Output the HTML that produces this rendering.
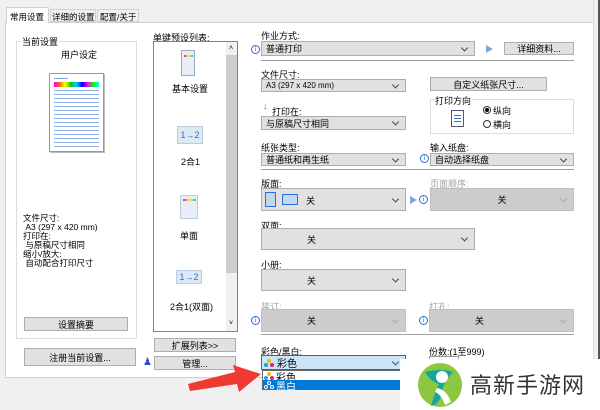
<!DOCTYPE html>
<html><head><meta charset="utf-8"><style>
*{margin:0;padding:0;box-sizing:border-box}
body{width:600px;height:410px;background:#f0f0f0;position:relative;overflow:hidden;font-family:"Liberation Sans","Noto Sans CJK SC",sans-serif;font-size:9px;color:#000}
.a{position:absolute;white-space:nowrap}
.sel{position:absolute;background:#e1e1e1;border:1px solid #adadad;font-size:9px;padding-left:4px;display:flex;align-items:center}
.sel::after{content:"";position:absolute;right:7px;top:50%;width:4px;height:4px;border-right:1px solid #444;border-bottom:1px solid #444;transform:translateY(-70%) rotate(45deg)}
.dis{background:#cccccc;border-color:#bfbfbf}
.dis::after{border-color:#aaa}
.btn{position:absolute;background:#e1e1e1;border:1px solid #adadad;text-align:center;font-size:9px;display:flex;align-items:center;justify-content:center}
.sep{position:absolute;height:2px;border-top:1px solid #a0a0a0;border-bottom:1px solid #fff}
.i{position:absolute;width:9px;height:9px;border:1px solid #2a6fd6;border-radius:50%;color:#2a6fd6;font-size:7px;line-height:7px;text-align:center;font-family:"Liberation Serif",serif}
.tri{position:absolute;width:0;height:0;border-left:7px solid #7aa8e0;border-top:4px solid transparent;border-bottom:4px solid transparent}
.ctr{justify-content:center;padding-left:0}
.dots{position:absolute;width:10px;height:8px}
.dots i{position:absolute;width:4px;height:4px;border-radius:50%}
</style></head><body>
<!-- tabs -->
<div class="a" style="left:6px;top:7px;width:43px;height:16px;background:#fff;border:1px solid #d0d0d0;border-bottom:none;z-index:2;padding:3px 0 0 3px;font-size:8.5px">常用设置</div>
<div class="a" style="left:50px;top:9px;width:46px;height:13px;background:#f0f0f0;border:1px solid #d0d0d0;padding:1px 0 0 1px;font-size:8.5px;overflow:hidden">详细的设置</div>
<div class="a" style="left:97px;top:9px;width:42px;height:13px;background:#f0f0f0;border:1px solid #d0d0d0;padding:1px 0 0 2px;font-size:8.5px">配置/关于</div>
<div class="a" style="left:5px;top:22px;width:589px;height:356px;background:#fff;border:1px solid #d0d0d0"></div>
<div class="a" style="left:593px;top:0;width:1px;height:400px;background:#ddd"></div>
<div class="a" style="left:598px;top:0;width:2px;height:410px;background:#555"></div>

<!-- left group -->
<div class="a" style="left:16px;top:41px;width:121px;height:298px;border:1px solid #dcdcdc"></div>
<div class="a" style="left:21px;top:35px;background:#fff;padding:0 1px">当前设置</div>
<div class="a" style="left:61px;top:48px">用户设定</div>
<div class="a" style="left:49px;top:73px;width:55px;height:79px;background:#fff;border:1px solid #999;box-shadow:1px 1px 0 #bbb">
 <div class="a" style="left:4px;top:4px;width:14px;height:1px;background:#7aa8e0"></div>
 <div class="a" style="left:4px;top:8px;width:45px;height:5px;background:linear-gradient(90deg,#f0e,#f60,#ff0,#0c0,#0cf,#00f,#f0f,#0f0,#0ff)"></div>
 <div class="a" style="left:4px;top:16px;width:45px;height:58px;background:repeating-linear-gradient(#8fb2e8 0 1px,transparent 1px 4px)"></div>
</div>
<div class="a" style="left:23px;top:214px;line-height:9px;font-size:8.5px">文件尺寸:<br>&nbsp;A3 (297 x 420 mm)<br>打印在:<br>&nbsp;与原稿尺寸相同<br>缩小/放大:<br>&nbsp;自动配合打印尺寸</div>
<div class="btn" style="left:24px;top:317px;width:104px;height:14px">设置摘要</div>
<div class="btn" style="left:24px;top:348px;width:112px;height:18px">注册当前设置...</div>

<!-- middle list -->
<div class="a" style="left:153px;top:31px">单键预设列表:</div>
<div class="a" style="left:153px;top:41px;width:85px;height:291px;border:1px solid #828282;background:#fff"></div>
<div class="a" style="left:226px;top:42px;width:11px;height:289px;background:#f0f0f0"></div>
<div class="a" style="left:226px;top:55px;width:11px;height:218px;background:#cdcdcd"></div>
<div class="a" style="left:229px;top:45px;font-size:7px">˄</div>
<div class="a" style="left:229px;top:320px;font-size:7px">˅</div>
<div class="a" style="left:181px;top:50px;width:14px;height:26px;background:#e8eef8;border:1px solid #9ab"><div class="a" style="left:2px;top:4px;width:9px;height:2px;background:linear-gradient(90deg,#f0f,#ff0,#0cf)"></div></div>
<div class="a" style="left:172px;top:82px">基本设置</div>
<div class="a" style="left:177px;top:126px;width:26px;height:18px;background:#dfe8f5;border:1px solid #bcd;color:#2a6fd6;font-size:9px;text-align:center;line-height:16px">1→2</div>
<div class="a" style="left:181px;top:155px">2合1</div>
<div class="a" style="left:180px;top:195px;width:18px;height:24px;background:#e8eef8;border:1px solid #bcd"><div class="a" style="left:2px;top:3px;width:13px;height:2px;background:linear-gradient(90deg,#f0f,#ff0,#0cf)"></div></div>
<div class="a" style="left:180px;top:229px">单面</div>
<div class="a" style="left:176px;top:270px;width:26px;height:14px;background:#dfe8f5;border:1px solid #bcd;color:#2a6fd6;font-size:9px;text-align:center;line-height:12px">1→2</div>
<div class="a" style="left:170px;top:300px">2合1(双面)</div>
<div class="btn" style="left:154px;top:338px;width:82px;height:14px">扩展列表&gt;&gt;</div>
<div class="a" style="left:143px;top:358px;width:8px;height:10px;color:#2a4fd6;font-size:10px;line-height:10px">&#9823;</div>
<div class="btn" style="left:154px;top:356px;width:82px;height:14px">管理...</div>

<!-- right -->
<div class="a" style="left:261px;top:29px">作业方式:</div>
<div class="i" style="left:251px;top:45px">i</div>
<div class="sel" style="left:261px;top:41px;width:214px;height:15px">普通打印</div>
<div class="tri" style="left:486px;top:45px"></div>
<div class="btn" style="left:504px;top:42px;width:70px;height:13px">详细资料...</div>
<div class="sep" style="left:261px;top:60px;width:313px"></div>

<div class="a" style="left:261px;top:68px">文件尺寸:</div>
<div class="sel" style="left:261px;top:79px;width:145px;height:13px;font-size:8px">A3 (297 x 420 mm)</div>
<div class="btn" style="left:430px;top:77px;width:117px;height:14px">自定义纸张尺寸...</div>

<div class="a" style="left:263px;top:101px;color:#2a6fd6">↓</div>
<div class="a" style="left:272px;top:105px">打印在:</div>
<div class="sel" style="left:261px;top:116px;width:145px;height:14px">与原稿尺寸相同</div>
<div class="a" style="left:430px;top:99px;width:144px;height:35px;border:1px solid #dcdcdc"></div>
<div class="a" style="left:434px;top:94px;background:#fff;padding:0 1px">打印方向</div>
<div class="a" style="left:451px;top:110px;width:13px;height:17px;border:1px solid #557;background:repeating-linear-gradient(#fff 0 1px,#2a6fd6 1px 2px,#fff 2px 3px);background-clip:content-box;padding:2px"></div>
<div class="a" style="left:483px;top:106px;width:8px;height:8px;border:1px solid #333;border-radius:50%"><div style="margin:1px;width:4px;height:4px;border-radius:50%;background:#000"></div></div>
<div class="a" style="left:493px;top:104px">纵向</div>
<div class="a" style="left:483px;top:120px;width:8px;height:8px;border:1px solid #333;border-radius:50%"></div>
<div class="a" style="left:493px;top:118px">横向</div>

<div class="a" style="left:261px;top:141px">纸张类型:</div>
<div class="sel" style="left:261px;top:153px;width:145px;height:13px">普通纸和再生纸</div>
<div class="a" style="left:430px;top:141px">输入纸盘:</div>
<div class="i" style="left:420px;top:154px">i</div>
<div class="sel" style="left:430px;top:153px;width:144px;height:13px">自动选择纸盘</div>
<div class="sep" style="left:261px;top:169px;width:313px"></div>

<div class="a" style="left:261px;top:177px">版面:</div>
<div class="sel" style="left:261px;top:188px;width:145px;height:23px;padding-left:0">
 <div class="a" style="left:3px;top:3px;width:11px;height:15px;border:1px solid #2a6fd6;background:#c6d6ec"></div>
 <div class="a" style="left:20px;top:5px;width:16px;height:11px;border:1px solid #2a6fd6;background:#c6d6ec"></div>
 <div class="a" style="left:44px;top:5px">关</div></div>
<div class="tri" style="left:410px;top:196px"></div>
<div class="i" style="left:419px;top:195px">i</div>
<div class="a" style="left:430px;top:177px;color:#a0a0a0">页面顺序:</div>
<div class="sel dis ctr" style="left:430px;top:188px;width:144px;height:23px">关</div>

<div class="a" style="left:261px;top:219px">双面:</div>
<div class="sel" style="left:261px;top:228px;width:214px;height:22px;padding-left:45px">关</div>
<div class="a" style="left:261px;top:258px">小册:</div>
<div class="sel" style="left:261px;top:269px;width:145px;height:22px;padding-left:45px">关</div>
<div class="a" style="left:261px;top:300px;color:#a0a0a0">装订:</div>
<div class="i" style="left:251px;top:316px">i</div>
<div class="sel dis" style="left:261px;top:309px;width:145px;height:23px;padding-left:45px">关</div>
<div class="a" style="left:429px;top:300px;color:#a0a0a0">打孔:</div>
<div class="i" style="left:419px;top:316px">i</div>
<div class="sel dis" style="left:429px;top:309px;width:145px;height:23px;padding-left:45px">关</div>
<div class="sep" style="left:261px;top:334px;width:313px"></div>

<div class="a" style="left:261px;top:345px">彩色/黑白:</div>
<div class="sel" style="left:261px;top:355px;width:145px;height:15px;background:#cce4f7;border-color:#0078d7;padding-left:15px;font-size:10px">彩色</div>
<div class="dots" style="left:264px;top:359px"><i style="left:3px;top:0;background:#e8c000"></i><i style="left:0;top:4px;background:#1aa0e0"></i><i style="left:6px;top:4px;background:#e02070"></i></div>
<div class="a" style="left:262px;top:370px;width:146px;height:20px;background:#fff;border:1px solid #666"></div>
<div class="dots" style="left:264px;top:372px"><i style="left:3px;top:0;background:#e8c000"></i><i style="left:0;top:4px;background:#1aa0e0"></i><i style="left:6px;top:4px;background:#e02070"></i></div>
<div class="a" style="left:276px;top:369px;font-size:10px">彩色</div>
<div class="a" style="left:263px;top:380px;width:144px;height:9px;background:#0078d7"></div>
<div class="dots" style="left:264px;top:381px"><i style="left:3px;top:0;border:1px solid #fff"></i><i style="left:0;top:4px;border:1px solid #fff"></i><i style="left:6px;top:4px;border:1px solid #fff"></i></div>
<div class="a" style="left:276px;top:378px;font-size:10px;color:#fff">黑白</div>
<div class="a" style="left:429px;top:345px">份数:(1至999)</div>
<div class="a" style="left:429px;top:356px;width:30px;height:6px;border:1px solid #999;border-bottom:none"></div>

<!-- arrow -->
<svg class="a" style="left:185px;top:362px" width="80" height="32"><path d="M3 22 L50 10 L48 3 L76 12 L54 30 L52 22 L5 29 Z" fill="#ee3a30"/></svg>

<!-- logo overlay -->
<div class="a" style="left:400px;top:359px;width:200px;height:51px;background:#fff"></div>
<svg class="a" style="left:417px;top:362px" width="46" height="46" viewBox="0 0 46 46"><circle cx="23" cy="23" r="22" fill="#8dc63f"/><path d="M8 10 Q25 6 36 10 Q26 20 24 34 Q22 42 14 44 Q18 30 22 22 Q14 20 8 10Z" fill="#12a6a0"/><circle cx="25" cy="15" r="6" fill="#fff"/><path d="M20 26 Q30 28 34 40 L28 43 Q24 32 18 30Z" fill="#fff"/></svg>
<div class="a" style="left:470px;top:369px;font-size:22px;color:#333;letter-spacing:1px;font-family:'Noto Sans CJK SC',sans-serif;line-height:30px">高新手游网</div>
</body></html>
